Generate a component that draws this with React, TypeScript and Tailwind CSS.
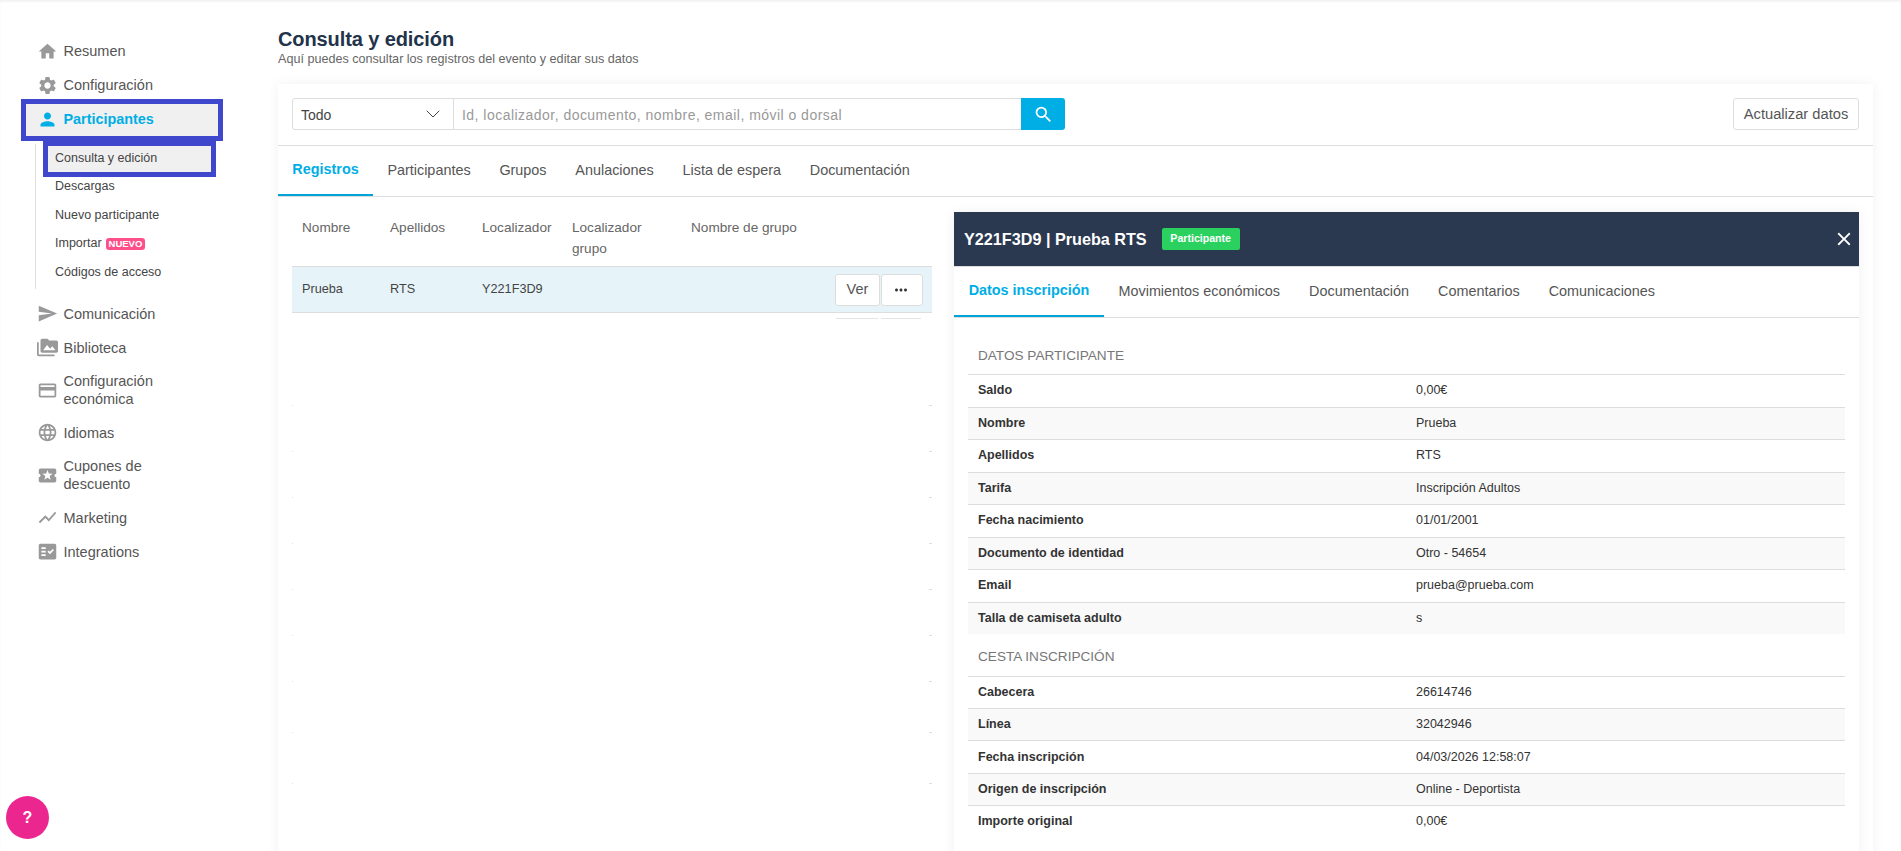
import React from "react";
import { ChevronDown } from "lucide-react";
import {
  MdHome,
  MdSettings,
  MdPerson,
  MdSend,
  MdPermMedia,
  MdCreditCard,
  MdLanguage,
  MdLocalActivity,
  MdShowChart,
  MdFactCheck,
  MdSearch,
  MdClose,
  MdMoreHoriz,
} from "react-icons/md";

const NavItem = ({ icon: Icon, label, tall }: { icon: React.ElementType; label: React.ReactNode; tall?: boolean }) => (
  <div className={`flex items-center text-[14.5px] leading-[18px] text-[#555] ${tall ? "h-[51px]" : "h-[34px]"}`}>
    <div className="flex w-[26.5px] shrink-0 items-center">
      <Icon size={21} className="text-[#999]" />
    </div>
    <div>{label}</div>
  </div>
);

const SubItem = ({ children }: { children: React.ReactNode }) => (
  <div className="flex h-[28.5px] items-center pl-[19px] text-[12.5px] text-[#444]">{children}</div>
);

const Sidebar = () => (
  <div className="w-[278px] shrink-0 pl-[37px] pt-[34px]">
    <NavItem icon={MdHome} label="Resumen" />
    <NavItem icon={MdSettings} label="Configuración" />
    <div className="relative h-[34px] font-bold">
      <div className="absolute top-0 bottom-0 left-[-11px] w-[192px] bg-[#f0f0f0]" />
      <div className="absolute top-[-3px] bottom-[-5px] left-[-16px] w-[202px] border-[5px] border-[#3f48cc]" />
      <div className="relative flex h-full items-center pt-px text-[14.4px] text-[#00aee6]">
        <div className="flex w-[26.5px] items-center">
          <MdPerson size={21} />
        </div>
        Participantes
      </div>
    </div>
    <div className="relative ml-[-2px] mt-[8px] border-l border-[#ddd] pb-[2px]">
      <div className="relative">
        <div className="absolute top-[-3px] bottom-[-4.5px] left-[7px] w-[173px] border-[5px] border-[#3f48cc] bg-[#f0f0f0]" />
        <div className="relative">
          <SubItem>Consulta y edición</SubItem>
        </div>
      </div>
      <SubItem>Descargas</SubItem>
      <SubItem>Nuevo participante</SubItem>
      <SubItem>
        Importar
        <span className="ml-1 rounded-[3px] bg-[#ff4f8b] px-[3px] text-[9.5px] leading-3 font-bold text-white">NUEVO</span>
      </SubItem>
      <SubItem>Códigos de acceso</SubItem>
    </div>
    <div className="mt-[8px]">
      <NavItem icon={MdSend} label="Comunicación" />
      <NavItem icon={MdPermMedia} label="Biblioteca" />
      <NavItem icon={MdCreditCard} tall label={<>Configuración<br />económica</>} />
      <NavItem icon={MdLanguage} label="Idiomas" />
      <NavItem icon={MdLocalActivity} tall label={<>Cupones de<br />descuento</>} />
      <NavItem icon={MdShowChart} label="Marketing" />
      <NavItem icon={MdFactCheck} label="Integrations" />
    </div>
  </div>
);

const Row = ({ label, value, odd, h }: { label: string; value: string; odd?: boolean; h: string }) => (
  <div className={`flex items-center border-t border-[#ddd] text-[12.5px] text-[#333] ${h} ${odd ? "bg-[#f9f9f9]" : ""}`}>
    <div className="w-[448px] pl-[10px] font-bold">{label}</div>
    <div>{value}</div>
  </div>
);

const datos = [
  ["Saldo", "0,00€"],
  ["Nombre", "Prueba"],
  ["Apellidos", "RTS"],
  ["Tarifa", "Inscripción Adultos"],
  ["Fecha nacimiento", "01/01/2001"],
  ["Documento de identidad", "Otro - 54654"],
  ["Email", "prueba@prueba.com"],
  ["Talla de camiseta adulto", "s"],
];

const cesta = [
  ["Cabecera", "26614746"],
  ["Línea", "32042946"],
  ["Fecha inscripción", "04/03/2026 12:58:07"],
  ["Origen de inscripción", "Online - Deportista"],
  ["Importe original", "0,00€"],
];

const mainTabs = ["Participantes", "Grupos", "Anulaciones", "Lista de espera", "Documentación"];
const panelTabs = ["Movimientos económicos", "Documentación", "Comentarios", "Comunicaciones"];
const ghostRows = [46, 46, 46, 46, 46, 46, 51, 51, 52];

const DetailPanel = () => (
  <div className="w-[905px] shrink-0 bg-white pb-6 shadow-[0_0_12px_rgba(0,0,0,0.06)]">
    <div className="flex h-[55px] items-center justify-between border-b border-[#ddd] bg-[#2a3950] pl-[10px] pr-[4px] text-white">
      <div className="flex items-center">
        <span className="text-[16.2px] font-bold">Y221F3D9 | Prueba RTS</span>
        <span className="ml-[15px] flex h-[22px] w-[78px] items-center justify-center rounded-[2px] bg-[#2ad15f] text-[10.6px] font-bold">
          Participante
        </span>
      </div>
      <MdClose size={22} />
    </div>
    <div className="flex h-[51px] border-b border-[#ddd] text-[14.4px] text-[#555]">
      <div className="flex w-[150px] items-center justify-center border-b-2 border-[#00a3d9] font-bold text-[#00aee6]">
        Datos inscripción
      </div>
      {panelTabs.map((tab) => (
        <div key={tab} className="flex items-center px-[14.5px]">
          {tab}
        </div>
      ))}
    </div>
    <div className="px-[14px]">
      <div className="flex h-[56px] items-end pb-[8px] pl-[10px] text-[13.6px] text-[#777]">DATOS PARTICIPANTE</div>
      {datos.map(([label, value], i) => (
        <Row key={label} h="h-[32.5px]" label={label} value={value} odd={i % 2 === 1} />
      ))}
      <div className="flex h-[41.5px] items-end pb-[8px] pl-[10px] text-[13.6px] text-[#777]">CESTA INSCRIPCIÓN</div>
      {cesta.map(([label, value], i) => (
        <Row key={label} h="h-[32.4px]" label={label} value={value} odd={i % 2 === 1} />
      ))}
    </div>
  </div>
);

const Registros = () => (
  <div className="w-[640px] shrink-0 text-[13.6px] text-[#555]">
    <div className="grid h-[70px] grid-cols-[88px_92px_90px_119px_1fr] border-b border-[#ddd] pl-[10px] pt-[20px] leading-[21px] text-[#666]">
      <div>Nombre</div>
      <div>Apellidos</div>
      <div>Localizador</div>
      <div>
        Localizador
        <br />
        grupo
      </div>
      <div>Nombre de grupo</div>
    </div>
    <div className="flex h-[46px] items-center justify-between border-b border-[#ddd] bg-[#e6f4fa] pl-[10px] pr-[9px]">
      <div className="grid grow grid-cols-[88px_92px_90px] text-[12.7px] text-[#444]">
        <div>Prueba</div>
        <div>RTS</div>
        <div>Y221F3D9</div>
      </div>
      <div className="flex gap-px">
        <button className="h-8 w-[45px] rounded-[3px] border border-[#ddd] bg-white text-[14.5px] text-[#555]">Ver</button>
        <button className="flex h-8 w-[42px] items-center justify-center rounded-[3px] border border-[#ddd] bg-white pr-[2px] text-[#333]">
          <MdMoreHoriz size={18} />
        </button>
      </div>
    </div>
    <div className="h-[92px] pt-[5px]">
      <div className="ml-auto mr-[11px] flex w-[85px] justify-between">
        <div className="h-px w-[42px] bg-[#e4e4e4]" />
        <div className="h-px w-[40px] bg-[#e4e4e4]" />
      </div>
    </div>
    {ghostRows.map((height, i) => (
      <div key={i} className="flex items-start justify-between" style={{ height }}>
        <div className="h-px w-px bg-[#ddd]" />
        <div className="h-px w-[3px] bg-[#ddd]" />
      </div>
    ))}
  </div>
);

export default function App() {
  return (
    <div className="relative flex h-[851px] overflow-hidden bg-white font-['Liberation_Sans',Arial,sans-serif] shadow-[inset_0_2px_2px_rgba(0,0,0,0.05)]">
      <Sidebar />
      <div className="flex min-w-0 grow flex-col pr-[28px] pt-[27px]">
        <h1 className="text-xl leading-6 font-bold tracking-[-0.1px] text-[#22334a]">Consulta y edición</h1>
        <p className="text-[12.6px] leading-4 text-[#666]">Aquí puedes consultar los registros del evento y editar sus datos</p>
        <div className="mt-[17px] bg-white shadow-[0_0_12px_rgba(0,0,0,0.06)]">
          <div className="flex h-[62px] items-start justify-between border-b border-[#ddd] px-[14px] pt-[14px]">
            <div className="flex">
              <div className="flex h-8 w-[162px] items-center justify-between rounded-l-[3px] border border-[#ddd] pl-2 pr-[8px] text-sm text-[#444]">
                <span className="pt-px">Todo</span>
                <ChevronDown size={24} strokeWidth={1} className="text-[#444]" />
              </div>
              <div className="flex h-8 w-[567px] items-center border-y border-[#ddd] pl-[8px] pt-[2px] text-sm tracking-[0.47px] text-[#999]">
                Id, localizador, documento, nombre, email, móvil o dorsal
              </div>
              <div className="flex h-8 w-[44px] items-center justify-center rounded-r-[3px] bg-[#00aee6] text-white">
                <MdSearch size={21} />
              </div>
            </div>
            <button className="h-8 w-[126px] rounded-[3px] border border-[#ddd] text-[14.7px] text-[#555]">Actualizar datos</button>
          </div>
          <div className="flex h-[51px] border-b border-[#ddd] text-[14.4px] text-[#555]">
            <div className="flex w-[95px] items-center justify-center border-b-2 border-[#00a3d9] font-bold text-[#00aee6]">
              Registros
            </div>
            {mainTabs.map((tab) => (
              <div key={tab} className="flex items-center px-[14.4px]">
                {tab}
              </div>
            ))}
          </div>
          <div className="flex gap-[22px] px-[14px] pt-0">
            <Registros />
            <div className="pt-[15px]">
              <DetailPanel />
            </div>
          </div>
        </div>
      </div>
      <button className="absolute left-[6px] top-[796px] flex size-[43px] items-center justify-center rounded-full bg-[#ec268f] text-base font-bold text-white">
        ?
      </button>
    </div>
  );
}
